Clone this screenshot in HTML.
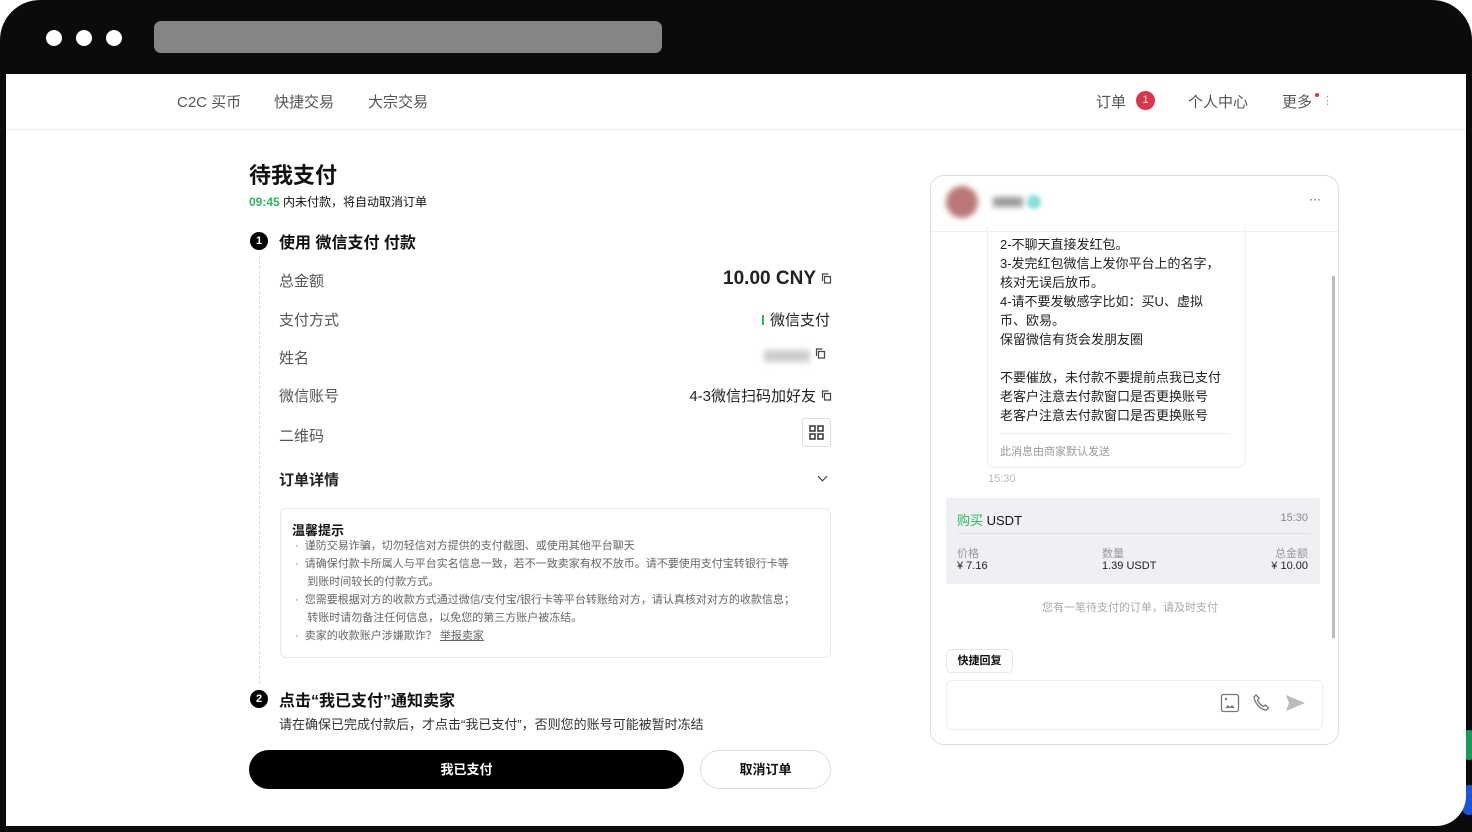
<!DOCTYPE html>
<html><head><meta charset="utf-8"><style>
*{margin:0;padding:0;box-sizing:border-box}
body{width:1472px;height:832px;background:#fff;overflow:hidden;font-family:"Liberation Sans","Noto Sans CJK SC",sans-serif;color:#111;position:relative}
.frame{position:absolute;left:0;top:0;width:1472px;height:832px;background:#0b0b0b;border-radius:40px 40px 0 0}
.page{position:absolute;left:6px;top:74px;width:1460px;height:752px;background:#fff;border-radius:0 0 30px 0;overflow:hidden}
.a{position:absolute;white-space:nowrap}
.dot{position:absolute;top:30px;width:16px;height:16px;border-radius:50%;background:#fff}
.nav{font-size:15px;color:#555}
.lbl{font-size:15px;color:#555}
.cp{display:inline-block;width:11px;height:11px;margin-left:5px;position:relative;top:0}
.num{position:absolute;width:18px;height:18px;border-radius:50%;background:#000;color:#fff;font-size:11px;font-weight:bold;text-align:center;line-height:18px}
.tip{font-size:11px;color:#666;line-height:18px}
</style></head><body>
<div class="frame"></div>
<div class="dot" style="left:46px"></div><div class="dot" style="left:76px"></div><div class="dot" style="left:106px"></div>
<div class="a" style="left:154px;top:21px;width:508px;height:32px;background:#858585;border-radius:7px"></div>
<div class="a" style="left:1462px;top:730px;width:14px;height:30px;border-radius:7px;background:#1a9a5a"></div>
<div class="a" style="left:1462px;top:785px;width:14px;height:30px;border-radius:7px;background:#1a55d8"></div>
<div class="page">
 <div class="a" style="left:0;top:55px;width:1460px;height:1px;background:#eee"></div>
 <div class="a nav" style="left:171px;top:17px">C2C 买币</div>
 <div class="a nav" style="left:268px;top:17px">快捷交易</div>
 <div class="a nav" style="left:362px;top:17px">大宗交易</div>
 <div class="a nav" style="left:1090px;top:17px">订单</div>
 <div class="a" style="left:1130px;top:17px;width:19px;height:19px;border-radius:50%;background:#e03347;color:#fff;font-size:11px;text-align:center;line-height:19px">1</div>
 <div class="a nav" style="left:1182px;top:17px">个人中心</div>
 <div class="a nav" style="left:1276px;top:17px">更多</div>
 <div class="a" style="left:1309px;top:19px;width:4px;height:4px;border-radius:50%;background:#e03347"></div>
 <div class="a" style="left:1316px;top:20px;color:#999;font-size:11px">⋮</div>

 <div class="a" style="left:243px;top:84px;font-size:22px;font-weight:bold">待我支付</div>
 <div class="a" style="left:243px;top:119px;font-size:12px"><span style="color:#2cb760;font-weight:bold">09:45</span> 内未付款，将自动取消订单</div>
 <div class="num" style="left:244px;top:158px">1</div>
 <div class="a" style="left:273px;top:155px;font-size:16px;font-weight:bold">使用 微信支付 付款</div>
 <div class="a" style="left:253px;top:182px;height:428px;border-left:1px dashed #ddd"></div>

 <div class="a lbl" style="left:273px;top:196px">总金额</div>
 <div class="a" style="right:634px;top:194px;font-size:19px;font-weight:bold;color:#222">10.00 CNY<svg class="cp" viewBox="0 0 11 11"><path d="M3.5 3.5h6v6.5h-6z M1.5 8V1h6" fill="none" stroke="#444" stroke-width="1.2"/></svg></div>
 <div class="a lbl" style="left:273px;top:235px">支付方式</div>
 <div class="a" style="right:636px;top:235px;font-size:15px;color:#222"><span style="display:inline-block;width:2px;height:10px;background:#2cb760;margin-right:6px"></span>微信支付</div>
 <div class="a lbl" style="left:273px;top:273px">姓名</div>
 <div class="a" style="left:758px;top:276px;width:46px;height:12px;background:#ccc;filter:blur(3px)"></div>
 <div class="a" style="left:804px;top:272px"><svg class="cp" viewBox="0 0 11 11"><path d="M3.5 3.5h6v6.5h-6z M1.5 8V1h6" fill="none" stroke="#444" stroke-width="1.2"/></svg></div>
 <div class="a lbl" style="left:273px;top:311px">微信账号</div>
 <div class="a" style="right:634px;top:311px;font-size:15px;color:#222">4-3微信扫码加好友<svg class="cp" viewBox="0 0 11 11"><path d="M3.5 3.5h6v6.5h-6z M1.5 8V1h6" fill="none" stroke="#444" stroke-width="1.2"/></svg></div>
 <div class="a lbl" style="left:273px;top:351px">二维码</div>
 <div class="a" style="left:796px;top:344px;width:29px;height:29px;border:1px solid #ddd;border-radius:3px"><svg width="27" height="27" viewBox="0 0 27 27"><g fill="none" stroke="#333" stroke-width="1.5"><rect x="7" y="7" width="5" height="5"/><rect x="15" y="7" width="5" height="5"/><rect x="7" y="15" width="5" height="5"/><rect x="15" y="15" width="5" height="5"/></g></svg></div>
 <div class="a" style="left:273px;top:395px;font-size:15px;font-weight:bold;color:#222">订单详情</div>
 <div class="a" style="left:813px;top:399px;width:7px;height:7px;border-right:1.5px solid #333;border-bottom:1.5px solid #333;transform:rotate(45deg)"></div>

 <div class="a" style="left:274px;top:434px;width:551px;height:150px;border:1px solid #e8e8e8;border-radius:6px"></div>
 <div class="a" style="left:286px;top:446px;font-size:13px;font-weight:bold">温馨提示</div>
 <div class="a tip" style="left:289px;top:463px">·&nbsp; 谨防交易诈骗，切勿轻信对方提供的支付截图、或使用其他平台聊天<br>·&nbsp; 请确保付款卡所属人与平台实名信息一致，若不一致卖家有权不放币。请不要使用支付宝转银行卡等<br>&nbsp;&nbsp;&nbsp; 到账时间较长的付款方式。<br>·&nbsp; 您需要根据对方的收款方式通过微信/支付宝/银行卡等平台转账给对方，请认真核对对方的收款信息；<br>&nbsp;&nbsp;&nbsp; 转账时请勿备注任何信息，以免您的第三方账户被冻结。<br>·&nbsp; 卖家的收款账户涉嫌欺诈？ <u>举报卖家</u></div>

 <div class="num" style="left:244px;top:616px">2</div>
 <div class="a" style="left:273px;top:613px;font-size:16px;font-weight:bold">点击“我已支付”通知卖家</div>
 <div class="a" style="left:273px;top:640px;font-size:13px;color:#333">请在确保已完成付款后，才点击“我已支付”，否则您的账号可能被暂时冻结</div>
 <div class="a" style="left:243px;top:676px;width:435px;height:39px;background:#000;border-radius:20px;color:#fff;font-size:13px;font-weight:bold;text-align:center;line-height:39px">我已支付</div>
 <div class="a" style="left:694px;top:676px;width:131px;height:39px;border:1px solid #ddd;border-radius:20px;font-size:13px;font-weight:bold;text-align:center;line-height:37px">取消订单</div>

 <div class="a" style="left:924px;top:101px;width:409px;height:570px;border:1.5px solid #ddd;border-radius:14px;overflow:hidden">
  <div class="a" style="left:15px;top:10px;width:32px;height:32px;border-radius:50%;background:#b77;filter:blur(3px)"></div>
  <div class="a" style="left:62px;top:21px;width:30px;height:10px;background:#999;filter:blur(3px)"></div>
  <div class="a" style="left:96px;top:19px;width:14px;height:14px;border-radius:50%;background:#8dd;filter:blur(2px)"></div>
  <div class="a" style="left:378px;top:16px;color:#444;font-size:12px">···</div>
  <div class="a" style="left:0;top:55px;width:409px;height:1px;background:#eee"></div>
  <div class="a" style="left:56px;top:50px;width:259px;height:242px;border:1px solid #eee;border-top:none;border-radius:0 0 8px 8px"></div>
  <div class="a" style="left:69px;top:59px;font-size:13px;line-height:19px;color:#222">2-不聊天直接发红包。<br>3-发完红包微信上发你平台上的名字，<br>核对无误后放币。<br>4-请不要发敏感字比如：买U、虚拟<br>币、欧易。<br>保留微信有货会发朋友圈<br><br>不要催放，未付款不要提前点我已支付<br>老客户注意去付款窗口是否更换账号<br>老客户注意去付款窗口是否更换账号</div>
  <div class="a" style="left:69px;top:257px;width:230px;height:1px;background:#eee"></div>
  <div class="a" style="left:69px;top:267px;font-size:11px;color:#999">此消息由商家默认发送</div>
  <div class="a" style="left:57px;top:297px;font-size:11px;color:#bbb">15:30</div>
  <div class="a" style="left:401px;top:100px;width:3px;height:362px;background:#bbb"></div>
  <div class="a" style="left:15px;top:322px;width:374px;height:86px;background:#eef0f4"></div>
  <div class="a" style="left:26px;top:334px;font-size:13px"><span style="color:#2cb760">购买</span> USDT</div>
  <div class="a" style="right:30px;top:336px;font-size:11px;color:#888">15:30</div>
  <div class="a" style="left:27px;top:357px;width:352px;height:1px;background:#dde"></div>
  <div class="a" style="left:26px;top:369px;font-size:11px;color:#999">价格</div>
  <div class="a" style="left:26px;top:384px;font-size:11px;color:#222">¥ 7.16</div>
  <div class="a" style="left:171px;top:369px;font-size:11px;color:#999">数量</div>
  <div class="a" style="left:171px;top:384px;font-size:11px;color:#222">1.39 USDT</div>
  <div class="a" style="right:30px;top:369px;font-size:11px;color:#999">总金额</div>
  <div class="a" style="right:30px;top:384px;font-size:11px;color:#222">¥ 10.00</div>
  <div class="a" style="left:111px;top:423px;font-size:11px;color:#aaa">您有一笔待支付的订单，请及时支付</div>
  <div class="a" style="left:15px;top:473px;width:67px;height:24px;border:1px solid #e5e5e5;border-radius:5px;font-size:11px;font-weight:bold;text-align:center;line-height:22px">快捷回复</div>
  <div class="a" style="left:15px;top:504px;width:377px;height:50px;border:1px solid #eee;border-radius:6px"></div>
  <svg class="a" style="left:289px;top:517px" width="20" height="20" viewBox="0 0 20 20"><rect x="1.5" y="1.5" width="17" height="17" rx="2" fill="none" stroke="#777" stroke-width="1.3"/><circle cx="6" cy="6" r="1.2" fill="#777"/><path d="M5 15l3-3 2 2 2-2 3 3z" fill="#777"/></svg>
  <svg class="a" style="left:321px;top:517px" width="20" height="20" viewBox="0 0 20 20"><path d="M4 2l3 3-1.5 2c1 3 3 5 6 6.5l2-1.5 3 3-2 2C9 17 3 11 2 4z" fill="none" stroke="#777" stroke-width="1.3"/></svg>
  <svg class="a" style="left:353px;top:517px" width="22" height="20" viewBox="0 0 22 20"><path d="M2 2l19 8-19 8 3-8z" fill="#bbb"/></svg>
 </div>
</div>
</body></html>
